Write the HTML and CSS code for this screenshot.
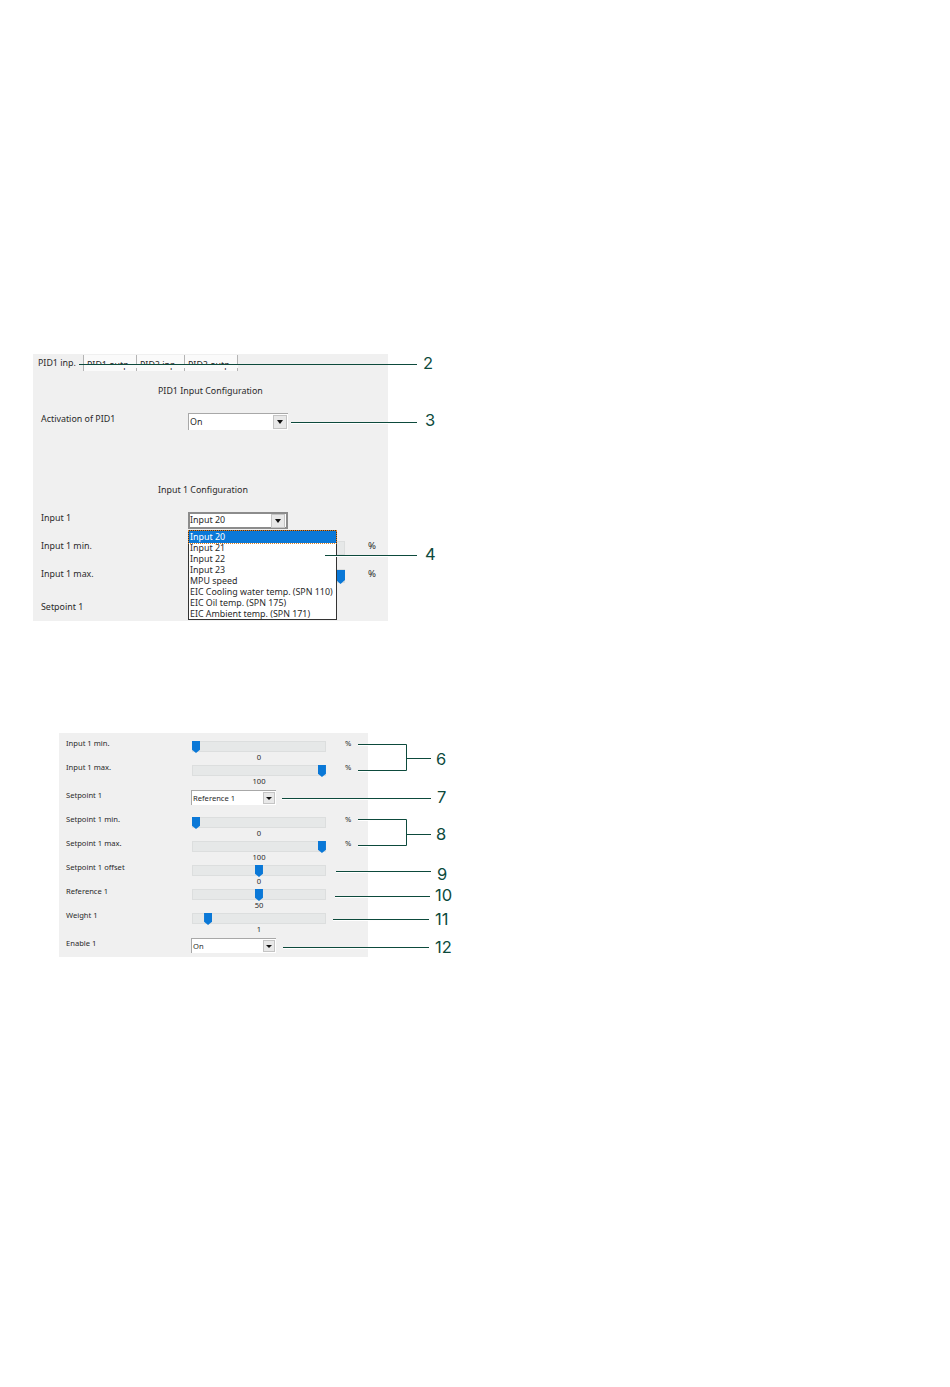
FILE: index.html
```html
<!DOCTYPE html>
<html lang="en">
<head>
<meta charset="utf-8">
<title>PID configuration</title>
<link rel="stylesheet" href="styles.css">
</head>
<body>
<main class="sheet">
  <section class="panel panel-large">
    <div class="tabs">
      <div class="tab tab-active">PID1 inp.</div>
      <div class="tab tab-a">PID1 outp.</div>
      <div class="tab tab-b">PID2 inp.</div>
      <div class="tab tab-c">PID2 outp.</div>
    </div>
    <div class="heading heading-first">PID1 Input Configuration</div>
    <div class="row row-activation">
      <div class="label">Activation of PID1</div>
      <div class="select select-large"><span class="select-text">On</span><span class="select-btn"><i class="arrow"></i></span></div>
    </div>
    <div class="heading heading-second">Input 1 Configuration</div>
    <div class="row row-input">
      <div class="label">Input 1</div>
      <div class="select select-large select-focus"><span class="select-text">Input 20</span><span class="select-btn"><i class="arrow"></i></span></div>
    </div>
    <div class="row row-range row-range-first">
      <div class="label label-up">Input 1 min.</div>
      <div class="track track-large"></div>
      <div class="unit">%</div>
    </div>
    <div class="row row-range">
      <div class="label label-up">Input 1 max.</div>
      <div class="track track-large"><span class="thumb thumb-large thumb-end"></span></div>
      <div class="unit">%</div>
    </div>
    <div class="row row-setpoint">
      <div class="label label-up">Setpoint 1</div>
    </div>
    <ul class="dropdown">
      <li class="option option-active">Input 20</li>
      <li class="option">Input 21</li>
      <li class="option">Input 22</li>
      <li class="option">Input 23</li>
      <li class="option">MPU speed</li>
      <li class="option">EIC Cooling water temp. (SPN 110)</li>
      <li class="option">EIC Oil temp. (SPN 175)</li>
      <li class="option">EIC Ambient temp. (SPN 171)</li>
    </ul>
  </section>

  <section class="panel panel-small">
    <div class="srow">
      <div class="slabel">Input 1 min.</div>
      <div class="slider"><div class="track"><span class="thumb" style="left:0%"></span></div><div class="value">0</div></div>
      <div class="sunit">%</div>
    </div>
    <div class="srow">
      <div class="slabel">Input 1 max.</div>
      <div class="slider"><div class="track"><span class="thumb" style="left:94%"></span></div><div class="value">100</div></div>
      <div class="sunit">%</div>
    </div>
    <div class="srow srow-select">
      <div class="slabel">Setpoint 1</div>
      <div class="select select-small"><span class="select-text">Reference 1</span><span class="select-btn"><i class="arrow"></i></span></div>
    </div>
    <div class="srow">
      <div class="slabel">Setpoint 1 min.</div>
      <div class="slider"><div class="track"><span class="thumb" style="left:0%"></span></div><div class="value">0</div></div>
      <div class="sunit">%</div>
    </div>
    <div class="srow">
      <div class="slabel">Setpoint 1 max.</div>
      <div class="slider"><div class="track"><span class="thumb" style="left:94%"></span></div><div class="value">100</div></div>
      <div class="sunit">%</div>
    </div>
    <div class="srow">
      <div class="slabel">Setpoint 1 offset</div>
      <div class="slider"><div class="track"><span class="thumb" style="left:47%"></span></div><div class="value">0</div></div>
    </div>
    <div class="srow">
      <div class="slabel">Reference 1</div>
      <div class="slider"><div class="track"><span class="thumb" style="left:47%"></span></div><div class="value">50</div></div>
    </div>
    <div class="srow">
      <div class="slabel">Weight 1</div>
      <div class="slider"><div class="track"><span class="thumb" style="left:9%"></span></div><div class="value">1</div></div>
    </div>
    <div class="srow srow-last">
      <div class="slabel">Enable 1</div>
      <div class="select select-small"><span class="select-text">On</span><span class="select-btn"><i class="arrow"></i></span></div>
    </div>
  </section>

  <svg class="callouts" width="950" height="1387" viewBox="0 0 950 1387" aria-hidden="true">
    <g class="halo">
      <path d="M291 423.5H417M325 556.5H417M358 745.5H406M358 771.5H406M282 799.5H431M358 820.5H406M358 846.5H406M336 872.5H431M335 897.5H430M333 920.5H429M283 948.5H429"/>
      <path class="halo-tabs" d="M84 366.5H238"/>
    </g>
    <g class="leader">
      <path d="M79 364.5H417M291 422.5H417M325 555.5H417"/>
      <path d="M358 744.5H406.5V770.5H358M406.5 758.5H431"/>
      <path d="M282 798.5H431"/>
      <path d="M358 819.5H406.5V845.5H358M406.5 834.5H431"/>
      <path d="M336 871.5H431M335 896.5H430M333 919.5H429M283 947.5H429"/>
    </g>
    <g class="nums">
      <text x="423" y="369">2</text>
      <text x="425" y="426">3</text>
      <text x="425" y="560">4</text>
      <text x="436" y="765">6</text>
      <text x="437" y="803">7</text>
      <text x="436" y="840">8</text>
      <text x="437" y="880">9</text>
      <text x="435" y="901">10</text>
      <text x="435" y="925">11</text>
      <text x="435" y="953">12</text>
    </g>
  </svg>
</main>
</body>
</html>
```

FILE: styles.css
```css
* { box-sizing: border-box; }

html, body { margin: 0; padding: 0; background: #fff; }

.sheet {
  position: relative;
  width: 950px;
  height: 1387px;
  padding-top: 354px;
  overflow: hidden;
  font-family: "Noto Sans", "Liberation Sans", Arial, sans-serif;
  color: #2a2a2a;
}

.panel { background: #f0f0f0; position: relative; overflow: hidden; }

/* Large panel */
.panel-large {
  width: 355px;
  height: 267px;
  margin-left: 33px;
  font-size: 8.9px;
  line-height: 14px;
}

.tabs { display: flex; height: 17px; padding-top: 1px; }
.tab {
  height: 16px;
  padding: 3px 0 0 3px;
  background: #fafafa;
  border-left: 1px solid #b4b4b4;
  white-space: nowrap;
  overflow: hidden;
}
.tab-active { width: 50px; padding: 1px 0 0 5px; background: #f0f0f0; border-left: 0; }
.tab-a { width: 53px; }
.tab-b { width: 48px; }
.tab-c { width: 54px; border-right: 1px solid #b4b4b4; }

.heading { margin-left: 125px; height: 14px; }
.heading-first { margin-top: 13px; }
.heading-second { margin-top: 53px; }

.row {
  display: grid;
  grid-template-columns: 147px 157px 32px;
  padding-left: 8px;
  column-gap: 0;
}
.row-activation { margin-top: 15px; height: 17px; }
.row-input { margin-top: 15px; height: 17px; }
.row-range { height: 14px; margin-top: 14px; }
.row-range-first { margin-top: 12px; }
.row-setpoint { margin-top: 19px; height: 14px; }
.label { margin-top: -1px; white-space: nowrap; }
.label-up { margin-top: -2px; }
.unit { padding-left: 23px; margin-top: -2px; font-size: 9.6px; }

/* Combo boxes */
.select {
  display: flex;
  align-items: center;
  background: #fff;
  border-left: 1px solid #a8a8a8;
  border-top: 1px solid #a8a8a8;
}
.select-large { width: 100px; height: 17px; }
.select-large .select-text { padding-bottom: 1px; }
.select-focus { border: 2px solid #8c8c8c; width: 100px; }
.select-focus .select-text { padding-left: 0; }
.select-text { flex: 1; padding-left: 1px; white-space: nowrap; }
.select-btn {
  width: 14px;
  height: 14px;
  margin-right: 1px;
  background: #e8e8e8;
  border: 1px solid #c4c4c4;
  display: flex;
  align-items: center;
  justify-content: center;
}
.arrow {
  width: 0;
  height: 0;
  border-left: 3.5px solid transparent;
  border-right: 3.5px solid transparent;
  border-top: 4px solid #111;
}

/* Slider */
.track {
  position: relative;
  height: 11px;
  background: #e6e8e8;
  box-shadow: inset 0 0 0 1px #dcdede;
}
.track-large { height: 14px; }
.thumb {
  position: absolute;
  top: 0;
  width: 8px;
  height: 12px;
  background: #0a78d7;
  clip-path: polygon(0 0, 100% 0, 100% 72%, 50% 100%, 0 72%);
}
.thumb-large { top: 1px; width: 9px; height: 14px; }
.thumb-end { right: 0; }

/* Popup list over the panel */
.dropdown {
  position: absolute;
  left: 155px;
  top: 176px;
  width: 149px;
  height: 90px;
  margin: 0;
  padding: 0;
  list-style: none;
  background: #fff;
  border: 1px solid #333;
}
.option { height: 11px; line-height: 11px; padding-left: 1px; white-space: nowrap; color: #2a2a2a; }
.option-active {
  height: 12px;
  line-height: 12px;
  margin-bottom: -1px;
  background: #0a78d7;
  color: #fff;
  outline: 1px dotted #e08020;
}

/* Small panel */
.panel-small {
  width: 309px;
  height: 224px;
  margin-top: 112px;
  margin-left: 59px;
  padding-top: 8px;
  font-size: 7.6px;
  line-height: 11px;
}
.srow {
  display: grid;
  grid-template-columns: 126px 134px 19px 10px;
  height: 24px;
  padding-left: 7px;
}
.srow-select { height: 28px; padding-top: 1px; grid-template-columns: 125px 85px; }
.srow-last { height: 20px; padding-top: 1px; grid-template-columns: 125px 85px; }
.slabel { white-space: nowrap; margin-top: -3px; }
.srow-select .slabel, .srow-last .slabel { margin-top: 0; }
.slider { display: flex; flex-direction: column; }
.value { text-align: center; line-height: 11px; margin-top: -1px; padding-top: 1px; }
.sunit { grid-column: 4; margin-top: -3px; }

.select-small { width: 85px; height: 15px; }
.select-small .select-btn { width: 12px; height: 12px; margin-right: 1px; }
.select-small .arrow { border-left-width: 3px; border-right-width: 3px; border-top-width: 3px; }

/* Callouts on top of everything */
.callouts { position: absolute; left: 0; top: 0; pointer-events: none; }
.leader path { fill: none; stroke: #0d4a3c; stroke-width: 1; }
.halo path { fill: none; stroke: #fff; stroke-width: 1; }
.halo .halo-tabs { stroke: #fafafa; stroke-width: 3; }
.nums text {
  font-family: Inter, "Liberation Sans", sans-serif;
  font-size: 16.5px;
  fill: #0d4a3c;
}
```
